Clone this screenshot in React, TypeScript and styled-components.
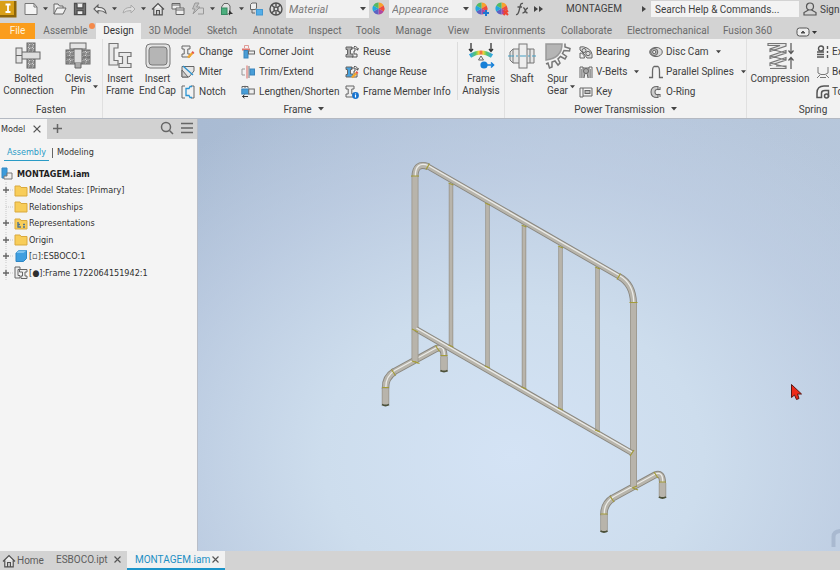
import React from "react";
import styled, { createGlobalStyle } from "styled-components";

const Global = createGlobalStyle`
  *, *::before, *::after { box-sizing: border-box; }
  html, body, #root { height: 100%; }
  body { margin: 0; overflow: hidden; background: #d4d4d4; }
  body, button, input, select { font-family: Roboto, "Open Sans", sans-serif; font-size: 10px; color: #404040; }
  button, a { border: 0; background: none; padding: 0; margin: 0; text-decoration: none; color: inherit; white-space: nowrap; }
  svg { display: block; flex: none; }
  ul { list-style: none; margin: 0; padding: 0; }
`;

const Window = styled.div`
  display: flex;
  flex-direction: column;
  height: 100%;
  overflow: hidden;
`;

/* Title bar */
const TitleBar = styled.header`
  display: flex;
  align-items: center;
  height: 18px;
  background: #d3d3d3;
  flex: none;
`;
const Logo = styled.div`
  width: 21px;
  height: 18px;
`;
const ToolButton = styled.button<{ $w?: number }>`
  width: ${(p) => p.$w ?? 20}px;
  height: 18px;
  flex: none;
  display: flex;
  align-items: center;
  justify-content: center;
`;
const SelectBox = styled.label`
  position: relative;
  display: flex;
  align-items: center;
  width: 83px;
  height: 18px;
  flex: none;
  background: #f1f1f1;
  svg { position: absolute; right: 3px; top: 7px; pointer-events: none; }
`;
const Select = styled.select`
  appearance: none;
  width: 100%;
  height: 18px;
  border: 0;
  padding: 0 12px 0 3px;
  background: transparent;
  color: #7c7c7c;
  font-style: italic;
  font-size: 11px;
`;
const DocTitle = styled.div`
  flex: 1 1 84px;
  padding-left: 6px;
  text-align: center;
  font-size: 10px;
  line-height: 18px;
`;
const Search = styled.input`
  width: 148px;
  height: 16px;
  flex: none;
  border: 0;
  padding: 0 4px;
  background: #f3f3f3;
  font-size: 10px;
  &::placeholder { color: #3f3f3f; opacity: 1; }
`;
const SignIn = styled.button`
  display: flex;
  align-items: center;
  gap: 3px;
  flex: none;
  width: 41px;
  padding-left: 4px;
  overflow: hidden;
`;

/* Ribbon tabs */
const TabRow = styled.nav`
  display: flex;
  height: 21px;
  padding-top: 5px;
  background: #d3d3d3;
  flex: none;
`;
const Tab = styled.button<{ $w: number; $kind?: "file" | "active" }>`
  position: relative;
  flex: none;
  width: ${(p) => p.$w}px;
  height: 16px;
  line-height: 16px;
  text-align: center;
  color: ${(p) => (p.$kind === "file" ? "#fff4dc" : p.$kind === "active" ? "#333" : "#6a6a6a")};
  background: ${(p) => (p.$kind === "file" ? "#fb9d1c" : p.$kind === "active" ? "#f3f3f3" : "transparent")};
`;
const Dot = styled.span`
  position: absolute;
  right: 1px;
  top: 0;
  width: 6px;
  height: 6px;
  border-radius: 50%;
  background: #f48a4b;
`;

/* Ribbon */
const Ribbon = styled.section`
  display: flex;
  height: 80px;
  flex: none;
  background: #f2f2f2;
  border-bottom: 1px solid #b4b9c2;
  overflow: hidden;
`;
const Panel = styled.div<{ $w: number }>`
  display: flex;
  flex-direction: column;
  flex: none;
  width: ${(p) => p.$w}px;
  border-right: 1px solid #e0e0e0;
`;
const PanelBody = styled.div`
  display: flex;
  height: 62px;
  padding-top: 3px;
`;
const PanelLabel = styled.div`
  display: flex;
  justify-content: center;
  align-items: center;
  gap: 6px;
  height: 16px;
`;
const Big = styled.button<{ $w: number }>`
  position: relative;
  display: flex;
  flex-direction: column;
  align-items: center;
  flex: none;
  width: ${(p) => p.$w}px;
  line-height: 12px;
  white-space: pre;
  > span { padding-top: 3px; }
`;
const BigCaret = styled.i`
  position: absolute;
  right: 1px;
  bottom: 12px;
`;
const SmallCol = styled.div<{ $w: number }>`
  display: flex;
  flex-direction: column;
  align-items: flex-start;
  flex: none;
  width: ${(p) => p.$w}px;
  padding-left: 3px;
`;
const Small = styled.button<{ $gap?: number }>`
  display: flex;
  align-items: center;
  gap: ${(p) => p.$gap ?? 4}px;
  height: 20px;
  line-height: 20px;
  svg + span + svg { margin-left: 4px; }
`;
const Divider = styled.div`
  width: 1px;
  height: 58px;
  background: #dcdcdc;
`;

/* Work area */
const Work = styled.main`
  display: flex;
  flex: 1;
  min-height: 0;
`;
const Browser = styled.aside`
  width: 198px;
  flex: none;
  background: #f4f4f4;
  border-right: 1px solid #b9bec8;
  overflow: hidden;
  color: #2f2f2f;
  &, button { font-family: "DejaVu Sans Condensed", "DejaVu Sans", Roboto, sans-serif; font-size: 9px; }
`;
const BrowserHead = styled.div`
  display: flex;
  height: 20px;
  background: #d2d2d2;
`;
const ModelTab = styled.button`
  display: flex;
  align-items: center;
  gap: 8px;
  width: 47px;
  padding-left: 1px;
  background: #f4f4f4;
  color: #333;
`;
const Spacer = styled.div`
  flex: 1;
`;
const Views = styled.div`
  display: flex;
  align-items: center;
  height: 19px;
  margin-top: 4px;
  padding-left: 4px;
`;
const View = styled.button<{ $on?: boolean }>`
  padding: 0 3px;
  height: 16px;
  line-height: 14px;
  color: ${(p) => (p.$on ? "#2a9bc6" : "#333")};
  border-bottom: 1px solid ${(p) => (p.$on ? "#2a9bc6" : "transparent")};
`;
const Bar = styled.span`
  width: 1px;
  height: 10px;
  margin: 0 1px 0 3px;
  background: #666;
`;
const Root = styled.div`
  display: flex;
  align-items: center;
  gap: 4px;
  height: 17px;
  margin-top: 3px;
  padding-left: 1px;
  font-weight: 700;
  color: #1f1f1f;
`;
const Tree = styled.ul`
  display: flex;
  flex-direction: column;
  height: 99px;
`;
const Node = styled.li`
  display: flex;
  align-items: center;
  flex: 1;
  gap: 1px;
  padding-left: 1px;
`;
const Viewport = styled.section`
  flex: 1;
  min-width: 0;
  background:
    radial-gradient(ellipse 78% 92% at 49% 78%, #d4e3f5 0%, #cddded 38%, rgba(194, 209, 230, 0.65) 72%, rgba(175, 192, 216, 0) 100%),
    linear-gradient(100deg, #a9bbd3 0%, #b5c5da 50%, #b7c7db 100%);
  svg { width: 100%; height: 100%; }
`;

const DocBar = styled.nav`
  display: flex;
  align-items: flex-start;
  height: 19px;
  flex: none;
  background: #d3d3d3;
`;
const DocTab = styled.div<{ $w: number; $on?: boolean }>`
  display: flex;
  align-items: center;
  justify-content: space-between;
  width: ${(p) => p.$w}px;
  height: 19px;
  padding: 0 6px 0 8px;
  color: ${(p) => (p.$on ? "#1c8fc4" : "#5d5d5d")};
  background: ${(p) => (p.$on ? "#f1f1f1" : "transparent")};
  border-bottom: 2px solid ${(p) => (p.$on ? "#1c94c9" : "transparent")};
`;
const HomeLink = styled.a`
  display: flex;
  align-items: center;
  gap: 1px;
  width: 48px;
  height: 19px;
  padding-left: 2px;
  color: #5d5d5d;
`;

/* Icons */
type IcoProps = { w?: number; h?: number; c?: string; s?: number; children: React.ReactNode };
const Ico = ({ w = 14, h = 14, c = "#666", s = 1, children }: IcoProps) => (
  <svg width={w} height={h} viewBox={`0 0 ${w} ${h}`} fill="none" stroke={c} strokeWidth={s} aria-hidden="true">
    {children}
  </svg>
);
const Caret = ({ w = 5 }: { w?: number }) => (
  <svg width={w} height="4" viewBox="0 0 6 4" aria-hidden="true"><path d="M0 0H6L3 3.6Z" fill="#444" /></svg>
);
const Cross = ({ z = 7 }: { z?: number }) => (
  <svg width={z} height={z} viewBox="0 0 8 8" aria-hidden="true"><path d="M.6 .6L7.4 7.4M7.4 .6L.6 7.4" stroke="#555" strokeWidth="1.3" /></svg>
);
const HomeIcon = () => (
  <Ico c="#4f4f4f" s={1.2}><path d="M1 7.5L7 1.5L13 7.5M2.8 6.5V12.8H11.2V6.5M5.5 12.5V8.5H8.5V12.5" fill="#efefef" /></Ico>
);
const Wheel = ({ badge }: { badge?: "plus" | "cross" }) => (
  <Ico s={0}>
    <path d="M6.5 6.5V.5A6 6 0 0 1 11.7 3.5Z" fill="#f8a12c" />
    <path d="M6.5 6.5L11.7 3.5A6 6 0 0 1 11.7 9.5Z" fill="#ee4c3c" />
    <path d="M6.5 6.5L11.7 9.5A6 6 0 0 1 6.5 12.5Z" fill="#b0479e" />
    <path d="M6.5 6.5V12.5A6 6 0 0 1 1.3 9.5Z" fill="#5d62c2" />
    <path d="M6.5 6.5L1.3 9.5A6 6 0 0 1 1.3 3.5Z" fill="#23a7dd" />
    <path d="M6.5 6.5L1.3 3.5A6 6 0 0 1 6.5 .5Z" fill="#55b963" />
    {badge === "plus" && <path d="M11 8V14M8 11H14" stroke="#1f77d0" strokeWidth="2" />}
    {badge === "cross" && <path d="M8.5 8.5L13 13M13 8.5L8.5 13" stroke="#ee4431" strokeWidth="2" />}
  </Ico>
);
const BEAM = "M1 1H9V4H6.8V9H9V12H1V9H3.2V4H1Z";
const Beam = ({ extra }: { extra?: React.ReactNode }) => (
  <Ico><path d={BEAM} fill="#eee" />{extra}</Ico>
);
const Pencil = () => (
  <><path d="M7 12.5L11.5 8" stroke="#f3a72e" strokeWidth="2.4" /><path d="M11.3 8.2L12.6 7" stroke="#e0514b" strokeWidth="2.4" /></>
);
const ReuseShape = ({ blue }: { blue?: boolean }) => (
  <><path d="M1 2H7V4.5H5.5V9H8V12H1V9.5H2.5V4.5H1Z" fill={blue ? "#48a2dd" : "#aaa"} /><path d="M6 3H10V6H9V9H12V12H7M9 1.5Q12.5 1 12.5 5M11 3.5L12.5 5.3L13.6 3.3" stroke="#555" /></>
);

const icons = {
  change: <Beam extra={<Pencil />} />,
  miter: <Ico><path d="M1 12V1.5H13V6L8 12Z" fill="#e6e6e6" /><path d="M1 12V5L7 12Z" fill="#ccc" /><path d="M2 1L12 10" stroke="#2b94d1" strokeWidth="1.3" /></Ico>,
  notch: <Ico><path d="M4 1H1V13H4M10 1H13V13H10" /><path d="M11 1.5H9L8 3.5H5V10.5H8L9 12.500H11" stroke="#2b94d1" strokeWidth="1.3" /></Ico>,
  corner: <Ico><path d="M1 4.5H9" stroke="#df746d" strokeWidth="2" /><rect x="3" y="5.5" width="4" height="7.5" fill="#4b9dd5" stroke="#3984bb" /><rect x="7.5" y="6" width="6" height="3" fill="#eee" /><path d="M3.5 3V.5H7.5V3" stroke="#df9995" /></Ico>,
  trim: <Ico><path d="M4 4H1V10H4" stroke="#999" /><path d="M6 .5V13.5" stroke="#d9655e" /><path d="M8 1V13" stroke="#777" /><rect x="9" y="4" width="4.5" height="6" fill="#489ed8" stroke="#3984bb" /></Ico>,
  lengthen: <Ico><path d="M1 3V1.5H7V3M4 .8V3" /><rect x=".8" y="4" width="7" height="5" fill="#489ed8" stroke="#3984bb" /><rect x="7.8" y="4" width="5.5" height="5" fill="#eee" /><path d="M1.5 11.5H7M3.5 9.8L1.5 11.5L3.5 13.2" stroke="#333" /></Ico>,
  reuse: <Ico><ReuseShape /></Ico>,
  changeReuse: <Ico><ReuseShape blue /><Pencil /></Ico>,
  info: <Beam extra={<><circle cx="10.5" cy="10.5" r="3.4" fill="#1673cf" stroke="none" /><path d="M10.5 8.5V9.4M10.5 10V12.6" stroke="#fff" strokeWidth="1.2" /></>} />,
  bearing: <Ico><path d="M1 2V5L5 9L8 13H13Q14 6 8 3Q4 1 1 2Z" fill="#ddd" /><circle cx="5" cy="5.5" r="2" /><circle cx="9" cy="8.5" r="2.2" /><path d="M1 8Q5 8 5.5 13H1Z" /></Ico>,
  vbelts: <Ico><path d="M1 13V2H4V13M4 3H10M10 13V2H13V13M5 13L6 8H8L9 13" /><circle cx="7" cy="6" r="2.5" fill="#aaa" /><path d="M2.5 4V13M11.5 4V13" stroke="#999" /></Ico>,
  key: <Ico><path d="M4 3H1V12H4ZM4 3H13V11H4" /><rect x="6" y="5.5" width="5" height="3" fill="#bbb" /></Ico>,
  disc: <Ico><ellipse cx="7" cy="7" rx="6.3" ry="4.6" fill="#ddd" /><circle cx="5.2" cy="7" r="3.6" fill="#bbb" /><circle cx="5.2" cy="7" r="1.6" fill="#f2f2f2" /></Ico>,
  spline: <Ico s={1.3}><path d="M0 12.5H3.5V7Q3.5 2 5 1.5H9Q10.5 2 10.5 7V12.5H14" /></Ico>,
  oring: <Ico s={1.1}><path d="M9 1.5Q2 1 2 7Q2 13 9 12.5V9.5Q6 10 6 7Q6 4 9 4.5Z" fill="#ccc" /><path d="M9 4.5H11V2M9 9.5H11V12" /></Ico>,
  ext: <Ico s={1.4} c="#555"><circle cx="5" cy="3.5" r="2.5" /><path d="M1 7H8M1 9.5H8M1 12H8M11.5 1V4M11.5 6V8M11.5 10V13" /></Ico>,
  belle: <Ico c="#777"><path d="M2 2V8L5 9.5H9L12 8V2M1 13L4 10M13 13L10 10M4 12.5H10" /></Ico>,
  torsion: <Ico s={1.5} c="#555"><path d="M13 1H8Q1 1 1 8V12.5H5.5V8Q5.5 5.5 9 5.5H12.5V12" /><circle cx="10.5" cy="11" r="2" /></Ico>,
};

const hatch = (
  <defs>
    <pattern id="hatch" width="4" height="4" patternUnits="userSpaceOnUse">
      <rect width="4" height="4" fill="#d2d2d2" /><path d="M0 4L4 0" stroke="#888" />
    </pattern>
  </defs>
);
const bigIcons = {
  bolt: <Ico w={28} h={28}>{hatch}<rect x="12" y="1" width="8" height="25" fill="url(#hatch)" /><rect x="5" y="10" width="20" height="7" fill="#dedede" /><rect x="1" y="6" width="6" height="15" fill="#e5e5e5" /><path d="M1 13.5H7" /></Ico>,
  clevis: <Ico w={28} h={28}><rect x="2" y="8" width="24" height="14" fill="url(#hatch)" /><path d="M2 15H9M19 15H26" /><rect x="6" y="1" width="16" height="6" fill="#e5e5e5" /><rect x="10" y="7" width="8" height="14" fill="#ddd" /><path d="M11 21V26H17V21" fill="#aaa" /></Ico>,
  frame: <Ico w={28} h={28} s={1.2} c="#777"><path d="M3 1.500H12V6H8V18.500H12V23H3Z" fill="#e9e9e9" /><path d="M13 10.500H25V14.500H21.500V21.500H25V25.500H13V21.500H16.500V14.500H13Z" fill="#e9e9e9" /></Ico>,
  cap: <Ico w={28} h={28} c="#777"><rect x="2" y="2" width="24" height="24" rx="4" fill="#e4e4e4" /><rect x="5" y="5" width="18" height="18" rx="3" fill="#b5b5b5" /></Ico>,
  analysis: (
    <Ico w={28} h={28}>
      <defs><linearGradient id="stress"><stop offset="0" stopColor="#2fa4e6" /><stop offset=".25" stopColor="#59c66b" /><stop offset=".4" stopColor="#f3d43b" /><stop offset=".5" stopColor="#ee5940" /><stop offset=".6" stopColor="#f3d43b" /><stop offset=".75" stopColor="#59c66b" /><stop offset="1" stopColor="#2fa4e6" /></linearGradient></defs>
      <path d="M3 14Q14 7 25 14" stroke="url(#stress)" strokeWidth="4" />
      <path d="M4 1V9M2 7L4 9.5L6 7M24 1V9M22 7L24 9.5L26 7" stroke="#333" strokeWidth="1.3" />
      <path d="M14 14L11.5 18H16.5Z" fill="#eee" /><circle cx="17" cy="23" r="3.6" fill="#1680d8" stroke="none" /><path d="M20 23H26M24 20.5L26.5 23L24 25.5" stroke="#1680d8" strokeWidth="1.6" />
    </Ico>
  ),
  shaft: <Ico w={28} h={28} c="#777"><path d="M5 7H26V21H5L2 18V10Z" fill="#e6e6e6" /><rect x="11" y="2" width="8" height="24" fill="#eee" /><path d="M5 7V21M22 7V21" /><path d="M0 14H28" stroke="#459fc4" strokeDasharray="6 2 2 2" /></Ico>,
  gear: <Ico w={28} h={28} s={1.5} c="#777"><path d="M2 2H18Q18 16 2 18Z" fill="#b5b5b5" stroke="#999" /><path d="M2 22L4 21L5.5 26L8 25L8 20L11 19L14 23L16 21L14 17L16.5 14.5L21 17L22.5 14.5L18.5 11.5L20 8.5L25.5 9L26 6.5L21 5L21 1.5" /></Ico>,
  spring: (
    <Ico w={28} h={28} c="#777" s={1.2}>
      <path d="M2 1.500H20V4L4 9.500V7L14 3.500H2ZM20 8.500V11L4 16.500V14L20 8.500ZM20 15.500V18L4 23.500V21L20 15.500ZM4 7L20 11M4 14L20 18M4 21L20 25M10 24H20V26.500H4" fill="#e4e4e4" />
      <path d="M25 1V11M22.500 8.500L25 11.500L27.500 8.500M25 27V16M22.500 18.500L25 15.500L27.500 18.500" stroke="#555" />
    </Ico>
  ),
};

const titleTools: { name: string; icon: React.ReactNode; w?: number }[] = [
  { name: "New", icon: <Ico c="#777"><path d="M1 1.5H10L13 5V12.5H1Z" fill="#f4f4f4" /><path d="M10 1.5V5H13" /></Ico> },
  { name: "New options", icon: <Caret w={5} />, w: 9 },
  { name: "Open", icon: <Ico c="#666"><path d="M1 12V2H5L6.5 4H10V6M1 12L4 6H13L10 12Z" fill="#f0f0f0" /></Ico> },
  { name: "Save", icon: <Ico s={1.3} c="#4f4f4f"><path d="M1.5 1.5H12.5V12.5H1.5Z" fill="#777" /><path d="M4 1.5V6H10V1.5M4 12V8.5H10V12" fill="#eee" /></Ico> },
  { name: "Undo", icon: <Ico s={1.1} c="#5f5f5f"><path d="M1 7L5 3V5.5Q12 5 13 11Q10 8.5 5 8.5V11Z" fill="#eee" /></Ico> },
  { name: "Undo options", icon: <Caret w={5} />, w: 9 },
  { name: "Redo", icon: <Ico c="#aaa"><path d="M13 7L9 3V5.5Q2 5 1 11Q4 8.5 9 8.5V11Z" fill="#ddd" /></Ico> },
  { name: "Redo options", icon: <Caret w={5} />, w: 9 },
  { name: "Home", icon: <HomeIcon /> },
  { name: "Team", icon: <Ico c="#666"><path d="M1 1.5H9V7H1ZM1 3H9" fill="#eee" /><path d="M5 6H13V12.5H5ZM5 8H13" fill="#eee" /></Ico> },
  { name: "Update", icon: <Ico c="#999"><path d="M4 1H8L5.5 5H9L2 12L4 7H1.5Z" fill="#c2c2c2" /><path d="M8 6H12.5V12H7" /></Ico> },
  { name: "Update options", icon: <Caret w={5} />, w: 9 },
  { name: "Select", icon: <Ico c="#666"><path d="M1.5 5L4 1.5H8L10 4V11L7 12.5H1.5Z" fill="#e2e2e2" /><rect x="1.5" y="6" width="5.5" height="6.5" fill="#4cae7e" stroke="#368a61" /><path d="M9 8L9 13.5L10.5 12L13 12Z" fill="#333" stroke="none" /></Ico> },
  { name: "Select options", icon: <Caret w={5} />, w: 9 },
  { name: "Components", icon: <Ico c="#666"><path d="M1.5 2.5L3 1H7.5V6L6.5 7.5H1.5Z" fill="#eee" /><rect x="7.5" y="7.5" width="6" height="5.5" fill="#55aee8" stroke="#4297d1" /><path d="M3 8V11H6" /></Ico> },
  { name: "Materials", icon: <Ico s={1.4} c="#505050"><circle cx="7" cy="7" r="6" fill="#ddd" /><circle cx="7" cy="7" r="2" /><path d="M2.5 3L5.5 5.5M11.5 3L8.5 5.5M2.5 11L5.5 8.5M11.5 11L8.5 8.5M7 1V4M7 10V13" /></Ico> },
];

const tabs: [string, number][] = [
  ["3D Model", 58], ["Sketch", 46], ["Annotate", 56], ["Inspect", 48], ["Tools", 38], ["Manage", 53], ["View", 37],
  ["Environments", 76], ["Collaborate", 67], ["Electromechanical", 96], ["Fusion 360", 63],
];

type Cmd = [React.ReactNode, string, boolean?];
const Column = ({ w, gap, items }: { w: number; gap?: number; items: Cmd[] }) => (
  <SmallCol $w={w}>
    {items.map(([icon, name, menu]) => (
      <Small key={name} $gap={gap}>{icon}<span>{name}</span>{menu && <Caret />}</Small>
    ))}
  </SmallCol>
);
const BigCommand = ({ w, icon, label, menu }: { w: number; icon: React.ReactNode; label: string; menu?: boolean }) => (
  <Big $w={w}>{icon}<span>{label}</span>{menu && <BigCaret><Caret w={5} /></BigCaret>}</Big>
);

const Folder = ({ reps }: { reps?: boolean }) => (
  <Ico w={14} h={13} c="#d9a93e"><path d="M1 2H6L7 3.5H13V12H1Z" fill="#f8cd59" />{reps && <path d="M4 5V10H7M4 7.5H6M9 7.5H11M9 10H11" stroke="#4c7392" strokeWidth="1.4" />}</Ico>
);
const nodes: { label: string; icon: React.ReactNode; leaf?: boolean }[] = [
  { label: "Model States: [Primary]", icon: <Folder /> },
  { label: "Relationships", icon: <Folder />, leaf: true },
  { label: "Representations", icon: <Folder reps /> },
  { label: "Origin", icon: <Folder /> },
  { label: "[▫]:ESBOCO:1", icon: <Ico c="#2e86c4"><path d="M2 4L5 1.5H12.5V9.5L9.5 12.5H2Z" fill="#3f9fe0" /><path d="M2 4L5 1.5H12.5L9.5 4Z" fill="#7cc3f0" stroke="none" /></Ico> },
  { label: "[●]:Frame 1722064151942:1", icon: <Ico><path d="M1 1H6V3.5H4V9.5H6V12H1Z" fill="#eee" /><path d="M5.5 3.5H13V6H11V10H13V12.5H7V10H8.5V6H5.5Z" fill="#eee" /></Ico> },
];

/* Barrier model */
const Tube = ({ d, w }: { d: string; w: number }) => (
  <g fill="none">
    <path d={d} stroke="#99958b" strokeWidth={w} />
    <path d={d} stroke="#b8b4ab" strokeWidth={w - 1.6} />
  </g>
);
const Rail = ({ d, w }: { d: string; w: number }) => (
  <g fill="none">
    <path d={d} stroke="#89867e" strokeWidth={w} />
    <path d={d} stroke="#b8b5ac" strokeWidth={w - 1.8} />
    <path d={d} stroke="#ecece9" strokeWidth="1.3" transform="translate(.3 -1)" />
  </g>
);
const Foot = ({ x, y }: { x: number; y: number }) => (
  <g transform={`translate(${x} ${y})`}>
    <Tube w={7.5} d="M58.500 -48V-33" />
    <Rail w={7} d="M7 -32L51 -56Q58.500 -59 58.500 -48" />
    <Tube w={7.5} d="M0 -17V0" />
    <Rail w={7.5} d="M0 -16Q-.5 -27 9 -33" />
    <path d="M-3.500 -17H3.500M55 -49H62M6 -35L10 -29M50 -59L54 -53M29 -43L34 -41" stroke="#a39b37" strokeWidth="1.200" />
    <path d="M-3.500 0Q0 2 3.500 0M55 -34Q58.500 -32 62 -34" stroke="#4b5039" strokeWidth="2" fill="none" />
  </g>
);
const bars = [[451, 184, 346], [487.5, 204, 367], [524, 226, 388], [560.5, 247, 409], [597.5, 268, 431]];
const Barrier = () => (
  <svg viewBox="198 119 642 432" preserveAspectRatio="xMidYMid slice" role="img" aria-label="Barrier frame model">
    <Foot x={385.5} y={404.5} />
    <Foot x={604} y={531} />
    <Tube w={7} d="M415 176V361" />
    <Tube w={7} d="M633.500 302V487" />
    {bars.map(([x, a, b]) => <Tube key={x} w={4.5} d={`M${x} ${a}V${b}`} />)}
    <Rail w={6} d="M416 329L632 453" />
    <Rail w={6} d="M427 166L620 277" />
    <Rail w={7} d="M415 177Q415 162 428 166.500" />
    <Rail w={7} d="M619 276.500Q633 284 633.500 303" />
    <g stroke="#a39b37" strokeWidth="1.200" fill="none">
      <path d="M411 176H419M426 169.500L429.500 163.500M617 279.500L620.500 273.500M629.500 302.500H637.500M412 329L418 332M630 456L634 450M412 361L418 363M632 488L637 486" />
      {bars.map(([x, a, b]) => <path key={x} d={`M${x - 2.5} ${a - 1}L${x + 2.5} ${a + 1}M${x - 2.5} ${b - 1}L${x + 2.5} ${b + 1}`} />)}
    </g>
    <path d="M833.500 547V537Q833.500 531 841 531" stroke="#a9b9d0" strokeWidth="4" fill="none" />
    <path d="M791.500 384.500V397.500L794.500 395L796.500 399.500L799 398.500L797.500 394H801.500Z" fill="#ee2a18" stroke="#5b1713" />
  </svg>
);

export default function App() {
  return (
    <Window>
      <Global />
      <TitleBar>
        <Logo>
          <svg width="17" height="18" viewBox="0 0 17 18" aria-hidden="true">
            <rect y="1" width="16.500" height="16.500" fill="#8e6508" /><rect y="1" width="14" height="14" fill="#d99f17" />
            <path d="M5.500 4.500H10.500M8 4.500V12M5.500 12H10.500" stroke="#fff" strokeWidth="1.800" />
          </svg>
        </Logo>
        {titleTools.map((t) => <ToolButton key={t.name} $w={t.w} aria-label={t.name}>{t.icon}</ToolButton>)}
        <SelectBox><Select aria-label="Material"><option>Material</option></Select><Caret w={6} /></SelectBox>
        <ToolButton aria-label="Appearance browser"><Wheel /></ToolButton>
        <SelectBox><Select aria-label="Appearance"><option>Appearance</option></Select><Caret w={6} /></SelectBox>
        <ToolButton aria-label="Adjust appearance"><Wheel badge="plus" /></ToolButton>
        <ToolButton aria-label="Clear appearance"><Wheel badge="cross" /></ToolButton>
        <ToolButton aria-label="Parameters">
          <Ico c="#555" s={1.3}><path d="M1 12.500Q3 13 4 9L5.500 3Q6 1 8 1.500M2.500 5H7M8 6Q9.500 5.500 10 8T12.500 11M13 6Q11.500 6 10.500 8.500T7.500 11" /></Ico>
        </ToolButton>
        <ToolButton $w={14} aria-label="More"><Ico w={10} h={8} s={0}><path d="M0 1L4 4L0 7ZM5 1L9 4L5 7Z" fill="#444" /></Ico></ToolButton>
        <DocTitle>MONTAGEM</DocTitle>
        <ToolButton $w={15} aria-label="Expand search"><Ico w={4} h={6} s={0}><path d="M0 0L4 3L0 6Z" fill="#444" /></Ico></ToolButton>
        <Search aria-label="Search" placeholder="Search Help &amp; Commands..." />
        <SignIn><Ico c="#555" s={1.2}><circle cx="7" cy="4.500" r="3.500" /><path d="M5.500 8L1 10.500V13H13V10.500L8.500 8" /></Ico>Sign In</SignIn>
      </TitleBar>
      <TabRow>
        <Tab $w={35} $kind="file">File</Tab>
        <Tab $w={61}>Assemble<Dot /></Tab>
        <Tab $w={45} $kind="active">Design</Tab>
        {tabs.map(([t, w]) => <Tab key={t} $w={w}>{t}</Tab>)}
        <ToolButton $w={54} aria-label="Ribbon display">
          <Ico w={24} h={10} c="#555"><rect x="3" y="1" width="12" height="8" rx="2.500" fill="#eee" /><path d="M7 6L9 4L11 6Z" fill="#444" /><path d="M18 4H23L20.500 7Z" fill="#333" stroke="none" /></Ico>
        </ToolButton>
      </TabRow>
      <Ribbon>
        <Panel $w={103}>
          <PanelBody>
            <BigCommand w={57} icon={bigIcons.bolt} label={"Bolted\nConnection"} />
            <BigCommand w={42} icon={bigIcons.clevis} label={"Clevis\nPin"} menu />
          </PanelBody>
          <PanelLabel>Fasten</PanelLabel>
        </Panel>
        <Panel $w={402}>
          <PanelBody>
            <BigCommand w={34} icon={bigIcons.frame} label={"Insert\nFrame"} />
            <BigCommand w={41} icon={bigIcons.cap} label={"Insert\nEnd Cap"} />
            <Column w={60} items={[[icons.change, "Change"], [icons.miter, "Miter"], [icons.notch, "Notch"]]} />
            <Column w={104} items={[[icons.corner, "Corner Joint"], [icons.trim, "Trim/Extend"], [icons.lengthen, "Lengthen/Shorten"]]} />
            <Column w={115} items={[[icons.reuse, "Reuse"], [icons.changeReuse, "Change Reuse"], [icons.info, "Frame Member Info"]]} />
            <Divider />
            <BigCommand w={46} icon={bigIcons.analysis} label={"Frame\nAnalysis"} />
          </PanelBody>
          <PanelLabel>Frame <Caret w={6} /></PanelLabel>
        </Panel>
        <Panel $w={242}>
          <PanelBody>
            <BigCommand w={34} icon={bigIcons.shaft} label="Shaft" />
            <BigCommand w={37} icon={bigIcons.gear} label={"Spur\nGear"} menu />
            <Column w={70} gap={3} items={[[icons.bearing, "Bearing"], [icons.vbelts, "V-Belts", true], [icons.key, "Key"]]} />
            <Column w={100} gap={3} items={[[icons.disc, "Disc Cam", true], [icons.spline, "Parallel Splines", true], [icons.oring, "O-Ring"]]} />
          </PanelBody>
          <PanelLabel>Power Transmission <Caret w={6} /></PanelLabel>
        </Panel>
        <Panel $w={133}>
          <PanelBody>
            <BigCommand w={66} icon={bigIcons.spring} label="Compression" />
            <Column w={66} gap={2} items={[[icons.ext, "Extension"], [icons.belle, "Belleville"], [icons.torsion, "Torsion"]]} />
          </PanelBody>
          <PanelLabel>Spring</PanelLabel>
        </Panel>
      </Ribbon>
      <Work>
        <Browser>
          <BrowserHead>
            <ModelTab>Model <Cross z={8} /></ModelTab>
            <ToolButton aria-label="Add panel"><Ico w={9} h={9} s={1.5}><path d="M4.500 0V9M0 4.500H9" /></Ico></ToolButton>
            <Spacer />
            <ToolButton aria-label="Find"><Ico s={1.5}><circle cx="6" cy="6" r="4.500" /><path d="M9.500 9.500L13 13" /></Ico></ToolButton>
            <ToolButton aria-label="Menu"><Ico s={1.5}><path d="M1 2.500H13M1 7H13M1 11.500H13" /></Ico></ToolButton>
          </BrowserHead>
          <Views><View $on>Assembly</View><Bar /><View>Modeling</View></Views>
          <Root>
            <Ico w={12} h={13} c="#777"><path d="M1 1H6V11H1Z" fill="#3b9bdb" stroke="#3388c4" /><path d="M6 6H11V12H3V9H6Z" fill="#eee" /></Ico>
            MONTAGEM.iam
          </Root>
          <Tree>
            {nodes.map((n) => (
              <Node key={n.label}>
                <Ico w={12} h={16} c="#c8c8c8"><path d="M5 0V16M5 8H12" strokeDasharray="1 1" />{!n.leaf && <path d="M2 8H8M5 5V11" stroke="#666" strokeWidth="1.300" />}</Ico>
                {n.icon}<span>{n.label}</span>
              </Node>
            ))}
          </Tree>
        </Browser>
        <Viewport><Barrier /></Viewport>
      </Work>
      <DocBar>
        <HomeLink href="#home"><HomeIcon />Home</HomeLink>
        <DocTab $w={79}>ESBOCO.ipt<ToolButton $w={8} aria-label="Close ESBOCO.ipt"><Cross /></ToolButton></DocTab>
        <DocTab $w={98} $on>MONTAGEM.iam<ToolButton $w={8} aria-label="Close MONTAGEM.iam"><Cross /></ToolButton></DocTab>
      </DocBar>
    </Window>
  );
}
